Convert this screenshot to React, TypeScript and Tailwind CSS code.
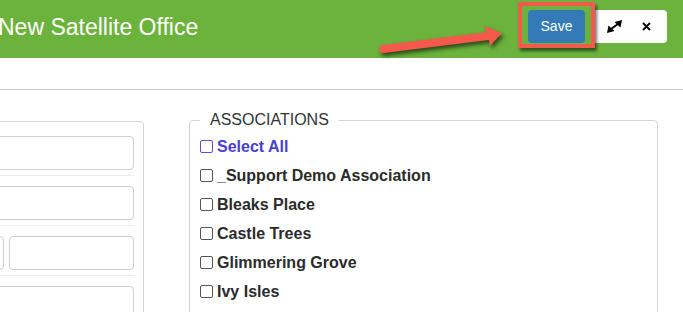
import React from "react";

const associations = [
  "_Support Demo Association",
  "Bleaks Place",
  "Castle Trees",
  "Glimmering Grove",
  "Ivy Isles",
];

const Box = ({ accent = false }: { accent?: boolean }) => (
  <span
    className={
      "h-[13px] w-[13px] shrink-0 rounded-[2px] border bg-white " +
      (accent ? "border-[#5a4ed6]" : "border-[#555]")
    }
  />
);

const Input = ({ className = "" }: { className?: string }) => (
  <div
    className={
      "h-[34px] rounded-[4px] border border-[#cfcfcf] bg-white " + className
    }
  />
);

export default function App() {
  return (
    <div
      className="relative h-[312px] w-[683px] overflow-hidden bg-white"
      style={{ fontFamily: '"Liberation Sans", Arial, sans-serif' }}
    >
      {/* title bar */}
      <div className="flex h-[58px] items-center bg-[#6bb33c]">
        <span className="-ml-[2px] mb-[4px] whitespace-nowrap text-[23px] text-white">
          New Satellite Office
        </span>

        <div className="mb-[5px] ml-auto mr-[16px] flex items-center">
          <div className="relative">
            <button className="h-[33px] w-[57px] rounded-[4px] bg-[#337ab7] text-[14px] text-white">
              Save
            </button>
            <span className="pointer-events-none absolute -bottom-[5px] -left-[10px] -right-[10px] -top-[8px] border-4 border-[#f15a4d] shadow-[2px_3px_3px_rgba(0,0,0,0.55)]" />
          </div>
          <div className="ml-[10px] flex h-[33px] items-center rounded-r-[4px] bg-white pl-[12px] pr-[16px]">
            <svg width="15" height="13" viewBox="0 0 15 13">
              <line x1="4" y1="9" x2="11" y2="4" stroke="#000" strokeWidth="2" />
              <polygon points="0,13 1.5,5.5 7.5,11" fill="#000" />
              <polygon points="15,0 13.5,7.5 7.5,2" fill="#000" />
            </svg>
            <svg className="ml-[20px]" width="9" height="9" viewBox="0 0 9 9">
              <path d="M1 1L8 8M8 1L1 8" stroke="#000" strokeWidth="1.8" />
            </svg>
          </div>
        </div>
      </div>

      <div className="h-[32px] border-b border-[#cccccc]" />

      {/* form body */}
      <div className="flex items-start pt-[18px]">
        <div className="-ml-[200px] mt-[13px] h-[200px] w-[344px] shrink-0 rounded-[4px] border border-[#d4d4d4] pr-[9px] pt-[14px]">
          <Input />
          <div className="mb-[10px] mt-[5px] h-px bg-[#ececec]" />
          <Input />
          <div className="mb-[10px] mt-[5px] h-px bg-[#ececec]" />
          <div className="flex gap-[5px]">
            <Input className="flex-1" />
            <Input className="w-[125px]" />
          </div>
          <div className="mb-[10px] mt-[5px] h-px bg-[#ececec]" />
          <Input />
        </div>

        <fieldset className="ml-[45px] h-[220px] w-[469px] shrink-0 rounded-[4px] border border-[#d4d4d4] pl-[10px]">
          <legend className="px-[10px] text-[16px] text-[#333]">
            ASSOCIATIONS
          </legend>
          <label className="flex h-[29px] items-center gap-[4px] text-[16px] font-bold text-[#4a3ed2]">
            <Box accent />
            Select All
          </label>
          {associations.map((name) => (
            <label
              key={name}
              className="flex h-[29px] items-center gap-[4px] text-[16px] font-bold text-[#2b2b2b]"
            >
              <Box />
              {name}
            </label>
          ))}
        </fieldset>
      </div>

      {/* annotation arrow */}
      <svg
        className="pointer-events-none absolute left-0 top-0 drop-shadow-[2px_3px_2px_rgba(0,0,0,0.6)]"
        width="683"
        height="60"
        viewBox="0 0 683 60"
      >
        <line
          x1="383"
          y1="49"
          x2="488"
          y2="36"
          stroke="#f4594b"
          strokeWidth="8"
          strokeLinecap="round"
        />
        <polygon points="502,33 484,26 488,36 490,46" fill="#f4594b" />
      </svg>
    </div>
  );
}
